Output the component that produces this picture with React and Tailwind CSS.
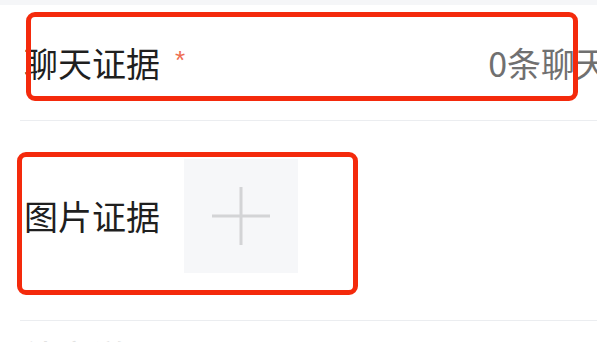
import React from 'react';

const cjk = { fontFamily: '"Noto Sans CJK SC", "Noto Sans", sans-serif' };

const PlusIcon = () => (
  <svg width="60" height="60" viewBox="0 0 60 60" fill="none">
    <path d="M30 1v58M1 30h58" stroke="#d3d4d6" strokeWidth="3" />
  </svg>
);

const App = () => {
  return (
    <div className="relative w-[597px] h-[342px] overflow-hidden bg-white" style={cjk}>
      {/* top strip */}
      <div className="h-[5px] bg-[#f5f6f8]" />

      {/* chat evidence row */}
      <div className="ml-[20px] h-[116px] flex items-center border-b border-[#ebedf0] whitespace-nowrap">
        <span className="ml-[4px] text-[34px] leading-none text-[#1f1f1f]">聊天证据</span>
        <span className="ml-[15px] -mt-[6px] font-['Liberation_Sans'] text-[26px] leading-none text-[#ee6d51]">*</span>
        <span className="ml-[303px] flex-none text-[34px] leading-none text-[#707070]">0条聊天记录</span>
      </div>

      {/* image evidence row */}
      <div className="ml-[20px] flex items-center pt-[38px] pb-[47px] border-b border-[#ebedf0]">
        <span className="ml-[4px] text-[34px] leading-none text-[#1f1f1f]">图片证据</span>
        <div className="ml-[24px] w-[114px] h-[114px] bg-[#f6f7f9] flex items-center justify-center">
          <PlusIcon />
        </div>
      </div>

      {/* next row, cut by the frame */}
      <div className="ml-[24px] pt-[18px] text-[34px] leading-none text-[#e2e2e2]">补充说明</div>

      {/* annotation boxes */}
      <div className="absolute left-[26px] top-[12px] w-[552px] h-[89px] border-[5px] border-[#f42a0c] rounded-[9px]" />
      <div className="absolute left-[17px] top-[152px] w-[341px] h-[143px] border-[5px] border-[#f42a0c] rounded-[9px]" />
    </div>
  );
};

export default App;
